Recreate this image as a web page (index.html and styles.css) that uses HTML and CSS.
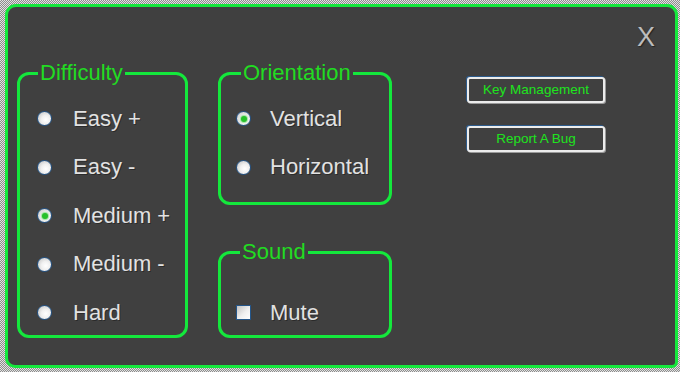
FILE: index.html
```html
<!DOCTYPE html>
<html lang="en">

<head>
    <meta charset="UTF-8">
    <meta name="viewport" content="width=device-width, initial-scale=1.0">
    <title>Options</title>
    <link rel="stylesheet" href="styles.css">
</head>

<body>
    <div class="dialog">
        <div class="dialog-top">
            <span class="close">X</span>
        </div>
        <div class="dialog-body">
            <fieldset class="group group-difficulty">
                <legend>Difficulty</legend>
                <label class="option"><input type="radio" name="difficulty">Easy +</label>
                <label class="option"><input type="radio" name="difficulty">Easy -</label>
                <label class="option"><input type="radio" name="difficulty" checked>Medium +</label>
                <label class="option"><input type="radio" name="difficulty">Medium -</label>
                <label class="option"><input type="radio" name="difficulty">Hard</label>
            </fieldset>

            <div class="middle">
                <fieldset class="group group-orientation">
                    <legend>Orientation</legend>
                    <label class="option"><input type="radio" name="orientation" checked>Vertical</label>
                    <label class="option"><input type="radio" name="orientation">Horizontal</label>
                </fieldset>
                <fieldset class="group group-sound">
                    <legend>Sound</legend>
                    <label class="option"><input type="checkbox" name="mute">Mute</label>
                </fieldset>
            </div>

            <!-- extra actions -->
            <div class="actions">
                <button class="action-btn">Key Management</button>
                <button class="action-btn">Report A Bug</button>
            </div>
        </div>
    </div>
</body>

</html>
```

FILE: styles.css
```css
/* Basic reset */
* {
    box-sizing: border-box;
    margin: 0;
    padding: 0;
}

body {
    font-family: "Liberation Sans", Arial, sans-serif;
    width: 680px;
    height: 372px;
    overflow: hidden;
    background-color: #bdbdbd;
    background-image: repeating-conic-gradient(#8c8c8c 0 25%, #e2e2e2 0 50%);
    background-size: 2px 2px;
}

.dialog {
    margin: 4px 2px 4px 5px;
    width: 673px;
    height: 364px;
    background-color: #404040;
    border: 3px solid #14e83c;
    border-radius: 11px 11px 6px 10px;
    display: flex;
    flex-direction: column;
}

.dialog-top {
    display: flex;
    justify-content: flex-end;
    padding: 16px 20px 0 0;
    height: 44.3px;
}

.close {
    font-size: 27px;
    line-height: 28px;
    color: #bcbcbc;
    text-shadow: 1px 1px 1px #222;
    cursor: pointer;
}

.dialog-body {
    display: flex;
    align-items: flex-start;
    margin-top: 11.2px;
    padding-left: 9px;
}

.group {
    border: 3px solid #14e83c;
    border-radius: 12px;
    min-width: 0;
    display: flex;
    flex-direction: column;
    gap: 24.5px;
}

.group legend {
    color: #22dc22;
    font-size: 22px;
    line-height: 22px;
    padding: 0 2px;
}

.group-difficulty {
    width: 171px;
    padding: 22.5px 0 10px 17px;
}

.group-difficulty legend {
    margin-left: 1px;
}

.group-difficulty .option input {
    margin-right: 21px;
}

.middle {
    margin-left: 30px;
    display: flex;
    flex-direction: column;
}

.group-orientation {
    width: 174px;
    padding: 22.5px 0 22.5px 15px;
}

.group-orientation legend {
    margin-left: 5px;
}

.group-sound {
    width: 174px;
    margin-top: 36.5px;
    padding: 37.5px 0 10px 15px;
}

.group-sound legend {
    margin-left: 4px;
}

.option {
    display: flex;
    align-items: center;
    height: 24px;
    font-size: 22px;
    line-height: 24px;
    color: #e2e2e2;
    text-shadow: 1px 1px 0 rgba(0, 0, 0, 0.35);
    white-space: nowrap;
}

.option input {
    appearance: none;
    -webkit-appearance: none;
    width: 15px;
    height: 15px;
    margin: 0 19px 0 0;
    border: 1px solid #24568a;
    flex-shrink: 0;
}

.option input[type="radio"] {
    border-radius: 50%;
    background: radial-gradient(circle at 60% 60%, #ffffff 0, #f0f0f0 40%, #bcbcbc 100%);
    display: flex;
    align-items: center;
    justify-content: center;
}

.option input[type="radio"]:checked::after {
    content: "";
    width: 6px;
    height: 6px;
    border-radius: 50%;
    background: #26c02a;
    box-shadow: 0 0 1px 1px #9be29d;
}

.option input[type="checkbox"] {
    background: linear-gradient(135deg, #c2c2c2 0, #efefef 55%, #ffffff 100%);
}

.actions {
    margin-left: 75px;
    margin-top: 14.5px;
    display: flex;
    flex-direction: column;
    gap: 23px;
}

.action-btn {
    width: 138px;
    height: 26px;
    background-color: #404040;
    color: #1ee41e;
    font-family: "Liberation Sans", Arial, sans-serif;
    font-size: 13.5px;
    border: 2px solid #ececec;
    border-radius: 3px;
    box-shadow: -1px -1px 0 #2d5b8c, 1px 1px 0 #9a9a9a;
    cursor: pointer;
}
```
